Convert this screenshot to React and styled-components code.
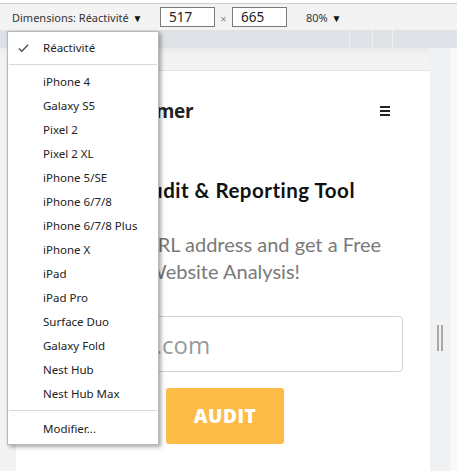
import React from 'react';
import styled, { createGlobalStyle } from 'styled-components';

const GlobalStyle = createGlobalStyle`
    html, body {
        margin: 0;
        padding: 0;
        background: #fff;
    }
    body {
        font-family: "Noto Sans", "Open Sans", sans-serif;
    }
`;

const devices = [
    'iPhone 4',
    'Galaxy S5',
    'Pixel 2',
    'Pixel 2 XL',
    'iPhone 5/SE',
    'iPhone 6/7/8',
    'iPhone 6/7/8 Plus',
    'iPhone X',
    'iPad',
    'iPad Pro',
    'Surface Duo',
    'Galaxy Fold',
    'Nest Hub',
    'Nest Hub Max',
];

const App = () => (
    <>
        <GlobalStyle />
        <Frame>
            <Toolbar>
                <DimLabel>Dimensions: Réactivité <Caret>▼</Caret></DimLabel>
                <SizeBox>517</SizeBox>
                <Times>×</Times>
                <SizeBox>665</SizeBox>
                <Zoom>80% <Caret>▼</Caret></Zoom>
            </Toolbar>
            <Ruler>
                <RulerSeg $grow />
                <RulerSeg $w={22} />
                <RulerSeg $w={19} />
                <RulerSeg $w={64} />
            </Ruler>
            <Viewport>
                <Canvas>
                    <Card>
                        <Header>
                            <Logo>seoptimer</Logo>
                            <Burger>
                                <span />
                                <span />
                                <span />
                            </Burger>
                        </Header>
                        <Heading>SEO Audit &amp; Reporting Tool</Heading>
                        <Lead>
                            Enter an URL address and get a Free
                            <br />
                            Website Analysis!
                        </Lead>
                        <UrlInput placeholder="example.com" readOnly />
                        <AuditButton>AUDIT</AuditButton>
                    </Card>
                </Canvas>
                <Gutter>
                    <Handle />
                </Gutter>
                <Edge />
            </Viewport>

            <Menu>
                <MenuItem>
                    <Check viewBox="0 0 12 10">
                        <polyline points="1,5.5 4.2,8.6 11,1.4" />
                    </Check>
                    Réactivité
                </MenuItem>
                <Separator />
                <Group>
                    {devices.map(d => (
                        <MenuItem key={d}>{d}</MenuItem>
                    ))}
                </Group>
                <Separator $after={6} />
                <MenuItem>Modifier...</MenuItem>
            </Menu>
        </Frame>
    </>
);

const Frame = styled.div`
    position: relative;
    width: 457px;
    height: 471px;
    overflow: hidden;
    background: #fff;
    display: flex;
    flex-direction: column;
    padding-top: 3px;
    box-sizing: border-box;
`;

const Toolbar = styled.div`
    height: 27px;
    flex-shrink: 0;
    display: flex;
    align-items: center;
    background: #f3f3f3;
    border-top: 1px solid #cfcfcf;
    padding-left: 12px;
    font-size: 11px;
    color: #333;
    box-sizing: border-box;
`;

const DimLabel = styled.span`
    width: 148px;
    white-space: nowrap;
`;

const Caret = styled.span`
    font-size: 10px;
    margin-left: 1px;
    color: #111;
`;

const SizeBox = styled.div`
    width: 55px;
    height: 20px;
    box-sizing: border-box;
    border: 1px solid #7a7a7a;
    background: #fff;
    padding-left: 8px;
    font-size: 13.5px;
    line-height: 18px;
    color: #222;
`;

const Times = styled.span`
    width: 17px;
    text-align: center;
    font-size: 11px;
    color: #888;
    padding-top: 3px;
`;

const Zoom = styled.span`
    margin-left: 19px;
    white-space: nowrap;
`;

const Ruler = styled.div`
    height: 18px;
    flex-shrink: 0;
    display: flex;
    gap: 1px;
    background: #f0f0f0;
`;

const RulerSeg = styled.div`
    background: #dee1e6;
    flex: ${p => (p.$grow ? '1' : `0 0 ${p.$w}px`)};
`;

const Viewport = styled.div`
    flex: 1;
    display: flex;
    background: #f3f3f3;
`;

const Canvas = styled.div`
    width: 430px;
    padding: 22px 0 0 16px;
    box-sizing: border-box;
    background: linear-gradient(#ebebeb, #f3f3f3 8px);
`;

const Card = styled.div`
    width: 414px;
    height: 100%;
    background: #fff;
    border-top: 1px solid #e2e2e2;
    display: flex;
    flex-direction: column;
    align-items: center;
    box-sizing: border-box;
`;

const Header = styled.div`
    align-self: stretch;
    height: 80px;
    display: flex;
    align-items: center;
    justify-content: space-between;
    padding: 0 40px 0 83px;
    box-sizing: border-box;
`;

const Logo = styled.div`
    font-family: "Open Sans", sans-serif;
    font-weight: 700;
    font-size: 19px;
    color: #222;
    letter-spacing: -0.3px;
`;

const Burger = styled.div`
    display: flex;
    flex-direction: column;
    gap: 2px;

    span {
        display: block;
        width: 10px;
        height: 2px;
        background: #222;
    }
`;

const Heading = styled.h1`
    margin: 26px 0 0;
    font-family: Lato, "Open Sans", sans-serif;
    font-weight: 700;
    font-size: 20.5px;
    line-height: 26px;
    color: #111;
    white-space: nowrap;
    letter-spacing: 0.5px;
`;

const Lead = styled.p`
    margin: 28px 0 0;
    font-family: Lato, "Open Sans", sans-serif;
    font-size: 20px;
    line-height: 27px;
    color: #7a7a7a;
    text-align: center;
    white-space: nowrap;
`;

const UrlInput = styled.input`
    margin-top: 31px;
    width: 360px;
    height: 56px;
    box-sizing: border-box;
    border: 1px solid #d2d2d2;
    border-radius: 4px;
    padding: 0 0 0 16px;
    font-family: "Open Sans", sans-serif;
    font-size: 24px;
    outline: none;

    &::placeholder {
        color: #9a9a9a;
    }
`;

const AuditButton = styled.button`
    margin-top: 16px;
    width: 118px;
    height: 56px;
    border: none;
    border-radius: 3px;
    background: #fdbb48;
    color: #fff;
    font-family: "Open Sans", sans-serif;
    font-weight: 800;
    font-size: 19px;
    letter-spacing: 0.5px;
    transform: translateX(2px);
`;

const Gutter = styled.div`
    width: 20px;
    background: #f0f1f2;
    padding-top: 277px;
    display: flex;
    justify-content: center;
    box-sizing: border-box;
`;

const Handle = styled.div`
    width: 6px;
    height: 26px;
    box-sizing: border-box;
    border-left: 2px solid #a8a8a8;
    border-right: 2px solid #a8a8a8;
`;

const Edge = styled.div`
    flex: 1;
    background: #f8f9fa;
`;

const Menu = styled.div`
    position: absolute;
    left: 7px;
    top: 31px;
    width: 152px;
    box-sizing: border-box;
    background: #fff;
    border: 1px solid #b9b9b9;
    box-shadow: 2px 2px 4px rgba(0, 0, 0, 0.35);
    padding: 4px 0 3px;
    font-family: "Noto Sans", "Open Sans", sans-serif;
    font-size: 11.5px;
    color: #222;
`;

const Group = styled.div`
    padding: 1px 0 0;
`;

const MenuItem = styled.div`
    position: relative;
    height: 24px;
    line-height: 24px;
    padding-left: 35px;
    white-space: nowrap;
`;

const Check = styled.svg`
    position: absolute;
    left: 10px;
    top: 7px;
    width: 11px;
    height: 10px;
    fill: none;
    stroke: #555;
    stroke-width: 1.6;
`;

const Separator = styled.div`
    height: 1px;
    margin: 4px 1px ${p => p.$after ?? 4}px;
    background: #d8d8d8;
`;

export default App;
